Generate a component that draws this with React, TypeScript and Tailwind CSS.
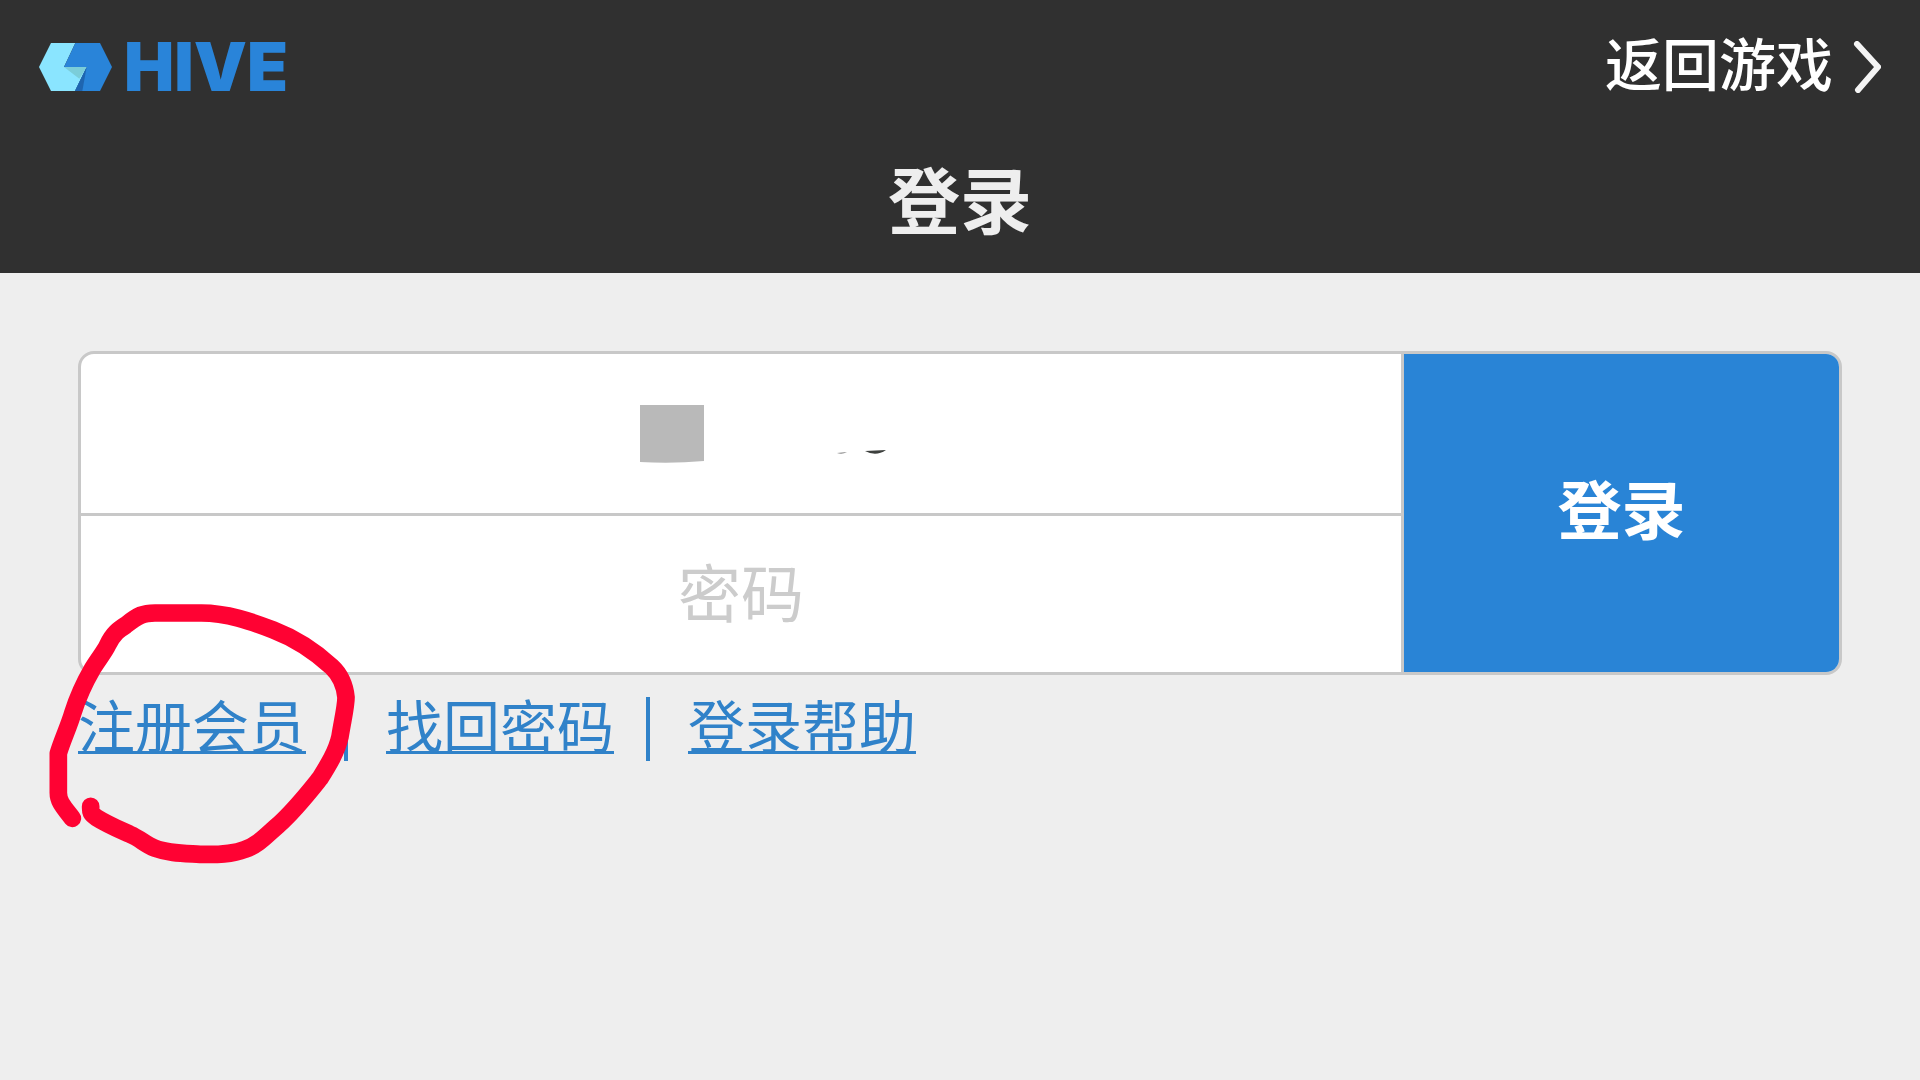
const HiveLogo = () => {
  return (
    <a href="#" className="flex h-12 items-center gap-3 text-[#2984d9]">
      <svg viewBox="0 0 219 144" className="h-12 w-[73px]">
        <path d="M36 0H109L75 72H143L108 144H36L0 72Z" fill="#8ae5ff" />
        <path d="M109 0H183L219 72L183 144H108L143 72H75Z" fill="#2984d9" />
        <path d="M75 72H143L121 107Z" fill="#7bcdd9" />
        <path d="M143 72L108 144H130Z" fill="#1e65b0" />
      </svg>
      <span className="font-[Inter,sans-serif] text-[67px] leading-12 font-black">
        HIVE
      </span>
    </a>
  );
};

const Header = () => {
  return (
    <header className="bg-[#303030] pt-[43px] pb-8">
      <div className="flex h-12 items-center justify-between px-[39px]">
        <HiveLogo />
        <a href="#" className="flex items-center gap-5 text-white">
          <span className="pb-3 text-[57px] leading-12 font-medium">返回游戏</span>
          <svg viewBox="0 0 28 52" className="h-[52px] w-7" fill="none">
            <path d="M4 3L25 26L5 49" stroke="#f4f4f4" strokeWidth="6" strokeLinecap="round" />
          </svg>
        </a>
      </div>
      <h1 className="mt-[62px] text-center text-[72px] leading-[88px] font-bold text-[#eee]">
        登录
      </h1>
    </header>
  );
};

const LoginForm = () => {
  return (
    <form className="flex overflow-hidden rounded-2xl border-3 border-[#c8c8c8] bg-white">
      <div className="flex min-w-0 flex-1 flex-col border-r-3 border-[#c8c8c8]">
        <div className="relative border-b-3 border-[#c8c8c8]">
          <input
            type="text"
            aria-label="账号"
            className="block h-[159px] w-full text-center text-[63px] outline-none"
          />
          <svg
            viewBox="0 0 248 60"
            className="pointer-events-none absolute top-[51px] left-1/2 h-[60px] w-[248px] -translate-x-[101px]"
          >
            <path d="M0 0H64V56Q32 59 0 57Z" fill="#b9b9b9" />
            <path d="M197 48L207 47Q202 50 197 48Z" fill="#888" />
            <path d="M225 46L246 45Q236 52 225 46Z" fill="#3d403e" />
          </svg>
        </div>
        <input
          type="password"
          aria-label="密码"
          placeholder="密码"
          className="block h-[156px] w-full pb-2.5 text-center text-[63px] outline-none placeholder:text-[#ccc]"
        />
      </div>
      <button type="submit" className="w-[435px] bg-[#2984d6] pb-3.5 text-[64px] font-bold text-white">
        登录
      </button>
    </form>
  );
};

// red hand-drawn ring around the sign up link
const Marker = () => {
  return (
    <svg
      viewBox="0 0 1020 870"
      className="pointer-events-none absolute -top-[85px] -left-[38px] h-[290px] w-[340px]"
      fill="none"
    >
      <path
        d="M97 685C70 650 55 635 55 608V490C65 455 88 405 98 370C112 325 132 280 158 235C180 200 195 183 203 165C220 130 235 120 258 105C295 75 310 69 345 69H480C560 68 635 95 700 120C765 145 820 180 875 230C905 258 915 290 918 322C918 350 908 390 900 440C890 485 865 525 840 565C800 615 765 660 715 705C680 735 655 765 615 778C570 796 515 793 480 793C430 790 385 790 345 775C315 763 300 745 270 733C235 717 200 702 170 683C150 670 152 665 152 649"
        stroke="#ff0233"
        strokeWidth="53"
        strokeLinecap="round"
        strokeLinejoin="round"
      />
    </svg>
  );
};

const linkClass =
  "underline decoration-3 underline-offset-3 [text-decoration-skip-ink:none]";

const Links = () => {
  return (
    <nav className="relative flex pt-3 text-[57px] leading-[72px] text-[#3082c9]">
      <a href="#" className={linkClass}>注册会员</a>
      <span className="mx-[38px] mt-2.5 h-16 w-1 bg-[#3082c9]" />
      <a href="#" className={linkClass}>找回密码</a>
      <span className="mr-[38px] ml-8 mt-2.5 h-16 w-1 bg-[#3082c9]" />
      <a href="#" className={linkClass}>登录帮助</a>
      <Marker />
    </nav>
  );
};

export default function App() {
  return (
    <div className="min-h-screen bg-[#eee] font-['Noto_Sans_CJK_SC',sans-serif]">
      <Header />
      <main className="px-[78px] pt-[78px]">
        <LoginForm />
        <Links />
      </main>
    </div>
  );
}
